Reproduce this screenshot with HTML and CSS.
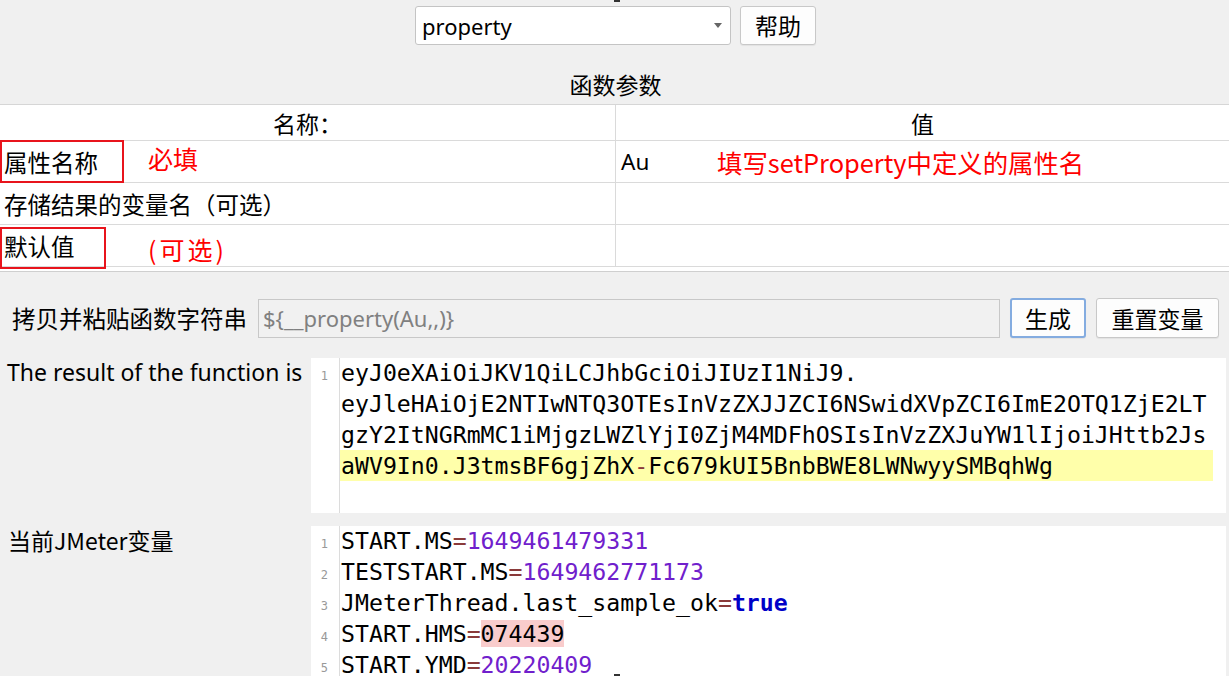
FILE: index.html
```html
<!DOCTYPE html>
<html lang="zh-CN">
<head>
<meta charset="utf-8">
<title>函数助手</title>
<link rel="stylesheet" href="styles.css">
</head>
<body>
<div class="page">
  <span class="split-mark split-top"></span>
  <div class="top">
    <div class="select">
      <span class="select-text">property</span>
      <span class="select-arrow"></span>
    </div>
    <button class="btn btn-help">帮助</button>
  </div>
  <div class="section-title">函数参数</div>

  <div class="table-pane">
    <div class="table">
      <div class="cell head">名称：</div>
      <div class="cell head col2">值</div>

      <div class="cell">
        <span>属性名称</span>
        <span class="mark-box box1"></span>
        <span class="note note1">必填</span>
      </div>
      <div class="cell col2">
        <span class="latin">Au</span>
        <span class="note note3">填写setProperty中定义的属性名</span>
      </div>

      <div class="cell"><span>存储结果的变量名（可选）</span></div>
      <div class="cell col2"></div>

      <div class="cell">
        <span>默认值</span>
        <span class="mark-box box2"></span>
        <span class="note note2">(可选)</span>
      </div>
      <div class="cell col2"></div>
    </div>
    <div class="table-tail"></div>
  </div>

  <div class="form-row">
    <label class="form-label">拷贝并粘贴函数字符串</label>
    <div class="text-input">${__property(Au,,)}</div>
    <button class="btn btn-gen">生成</button>
    <button class="btn btn-reset">重置变量</button>
  </div>

  <div class="result-row">
    <div class="row-label">The result of the function is</div>
    <div class="editor editor-result">
      <div class="gutter">
        <div class="ln">1</div>
      </div>
      <div class="code">
        <div class="line">eyJ0eXAiOiJKV1QiLCJhbGciOiJIUzI1NiJ9.</div>
        <div class="line">eyJleHAiOjE2NTIwNTQ3OTEsInVzZXJJZCI6NSwidXVpZCI6ImE2OTQ1ZjE2LT</div>
        <div class="line">gzY2ItNGRmMC1iMjgzLWZlYjI0ZjM4MDFhOSIsInVzZXJuYW1lIjoiJHttb2Js</div>
        <div class="line active">aWV9In0.J3tmsBF6gjZhX<span class="op">-</span>Fc679kUI5BnbBWE8LWNwyySMBqhWg</div>
      </div>
    </div>
  </div>

  <div class="vars-row">
    <div class="row-label">当前JMeter变量</div>
    <div class="editor editor-vars">
      <div class="gutter">
        <div class="ln">1</div>
        <div class="ln">2</div>
        <div class="ln">3</div>
        <div class="ln">4</div>
        <div class="ln">5</div>
      </div>
      <div class="code">
        <div class="line">START.MS<span class="op">=</span><span class="num">1649461479331</span></div>
        <div class="line">TESTSTART.MS<span class="op">=</span><span class="num">1649462771173</span></div>
        <div class="line">JMeterThread.last_sample_ok<span class="op">=</span><span class="kw">true</span></div>
        <div class="line">START.HMS<span class="op">=</span><span class="err">074439</span></div>
        <div class="line">START.YMD<span class="op">=</span><span class="num">20220409</span></div>
      </div>
    </div>
  </div>
  <span class="split-mark split-bottom"></span>
</div>
</body>
</html>
```

FILE: styles.css
```css
* { box-sizing: border-box; }

html, body {
  margin: 0;
  padding: 0;
  background: #f0f0f0;
}

body {
  width: 1229px;
  height: 676px;
  overflow: hidden;
  font-family: "Noto Sans", "Noto Sans CJK SC", sans-serif;
  font-size: 22px;
  color: #000;
}

.page {
  position: relative;
  width: 1229px;
  height: 676px;
  overflow: hidden;
}

.split-mark {
  position: absolute;
  width: 6px;
  height: 2px;
  background: #333;
}
.split-top { left: 614px; top: 0; }
.split-bottom { left: 614px; top: 674px; }

/* top selector */
.top {
  display: flex;
  justify-content: center;
  gap: 9px;
  padding-top: 6px;
  padding-left: 2px;
}

.select {
  position: relative;
  width: 316px;
  height: 39px;
  background: #fff;
  border: 1px solid #c4c4c4;
  border-radius: 3px;
  display: flex;
  align-items: center;
  padding-left: 6px;
}
.select-text {
  font-size: 22px;
  line-height: 1;
  margin-top: 1px;
}
.select-arrow {
  position: absolute;
  right: 8px;
  top: 16px;
  width: 0;
  height: 0;
  border-left: 4px solid transparent;
  border-right: 4px solid transparent;
  border-top: 5px solid #666;
}

.btn {
  font-family: "Noto Sans CJK SC", "Noto Sans", sans-serif;
  font-size: 23px;
  background: #fdfdfd;
  border: 1px solid #c8c8c8;
  border-radius: 3px;
  color: #000;
  padding: 0;
  height: 39px;
  line-height: 1;
  box-shadow: 0 1px 1px rgba(0,0,0,0.06);
}
.btn-help { width: 76px; }

.section-title {
  font-family: "Noto Sans CJK SC", sans-serif;
  text-align: center;
  font-size: 23px;
  line-height: 30px;
  margin-top: 24px;
  padding-left: 2px;
  height: 35px;
}

/* parameter table */
.table-pane {
  background: #fff;
  border-top: 1px solid #d6d6d6;
  border-bottom: 1px solid #cfcfcf;
}

.table {
  display: grid;
  grid-template-columns: 615px 1fr;
}

.cell {
  position: relative;
  height: 42px;
  border-bottom: 1px solid #dadada;
  display: flex;
  align-items: center;
  padding-left: 4px;
  font-family: "Noto Sans CJK SC", sans-serif;
  font-size: 23.5px;
}
.cell .latin {
  font-family: "Noto Sans", sans-serif;
  font-size: 22.5px;
}
.cell.col2 {
  border-left: 1px solid #dadada;
  padding-left: 5px;
}
.cell.head {
  height: 36px;
  justify-content: center;
  padding-left: 0;
  font-size: 23px;
}
.cell.head.col2 { padding-left: 0; }

.table-tail { height: 4px; }

.mark-box {
  position: absolute;
  border: 2px solid #e8141c;
  left: 0;
}
.box1 { top: -1px; width: 124px; height: 43px; }
.box2 { top: 2px; width: 106px; height: 42px; }

.note {
  position: absolute;
  color: #ff0000;
  font-family: "Noto Sans CJK SC", sans-serif;
  font-size: 25px;
  line-height: 1;
  white-space: nowrap;
}
.note1 { left: 148px; top: 5px; }
.note2 { left: 148px; top: 12px; letter-spacing: 3px; }
.note3 { left: 101px; top: 9px; font-size: 25.4px; }

/* copy row */
.form-row {
  display: flex;
  align-items: center;
  margin-top: 26px;
  padding-left: 12px;
  height: 40px;
}
.form-label {
  font-family: "Noto Sans CJK SC", sans-serif;
  font-size: 23.5px;
  width: 246px;
  white-space: nowrap;
}
.text-input {
  width: 742px;
  height: 39px;
  border: 1px solid #c8c8c8;
  background: #f1f1f1;
  color: #808080;
  display: flex;
  align-items: center;
  padding-left: 4px;
  font-size: 22px;
  margin-right: 10px;
}
.btn-gen {
  width: 76px;
  height: 40px;
  border: 2px solid #84ace0;
  margin-right: 10px;
}
.btn-reset { width: 123px; height: 40px; }

/* editors */
.result-row, .vars-row {
  display: flex;
}
.result-row { margin-top: 20px; }
.vars-row { margin-top: 13px; }

.row-label {
  width: 311px;
  padding-left: 7px;
  line-height: 29px;
  font-size: 23px;
  font-family: "Noto Sans", "Noto Sans CJK SC", sans-serif;
  white-space: nowrap;
}
.vars-row .row-label {
  padding-left: 8px;
  font-family: "Noto Sans CJK SC", sans-serif;
  font-size: 23px;
}

.editor {
  width: 915px;
  background: #fff;
  display: flex;
}
.editor-result { height: 155px; }
.editor-vars { height: 160px; }

.gutter {
  width: 29px;
  border-right: 1px solid #dcdcdc;
}
.ln {
  height: 31px;
  line-height: 31px;
  font-family: "DejaVu Sans Mono", monospace;
  font-size: 12px;
  color: #999;
  text-align: right;
  padding-right: 11px;
  padding-top: 3px;
}

.code {
  flex: 1;
  font-family: "DejaVu Sans Mono", monospace;
  font-size: 23.2px;
  padding-right: 13px;
  margin-top: -1px;
}
.line {
  height: 31px;
  line-height: 31px;
  white-space: pre;
  padding-left: 1px;
  color: #000;
}
.line.active { background: #ffffaa; }

.op { color: #8a3a3a; }
.num { color: #7020cc; }
.kw { color: #0000c8; font-weight: bold; }
.err { background: #f9cccc; }
```
